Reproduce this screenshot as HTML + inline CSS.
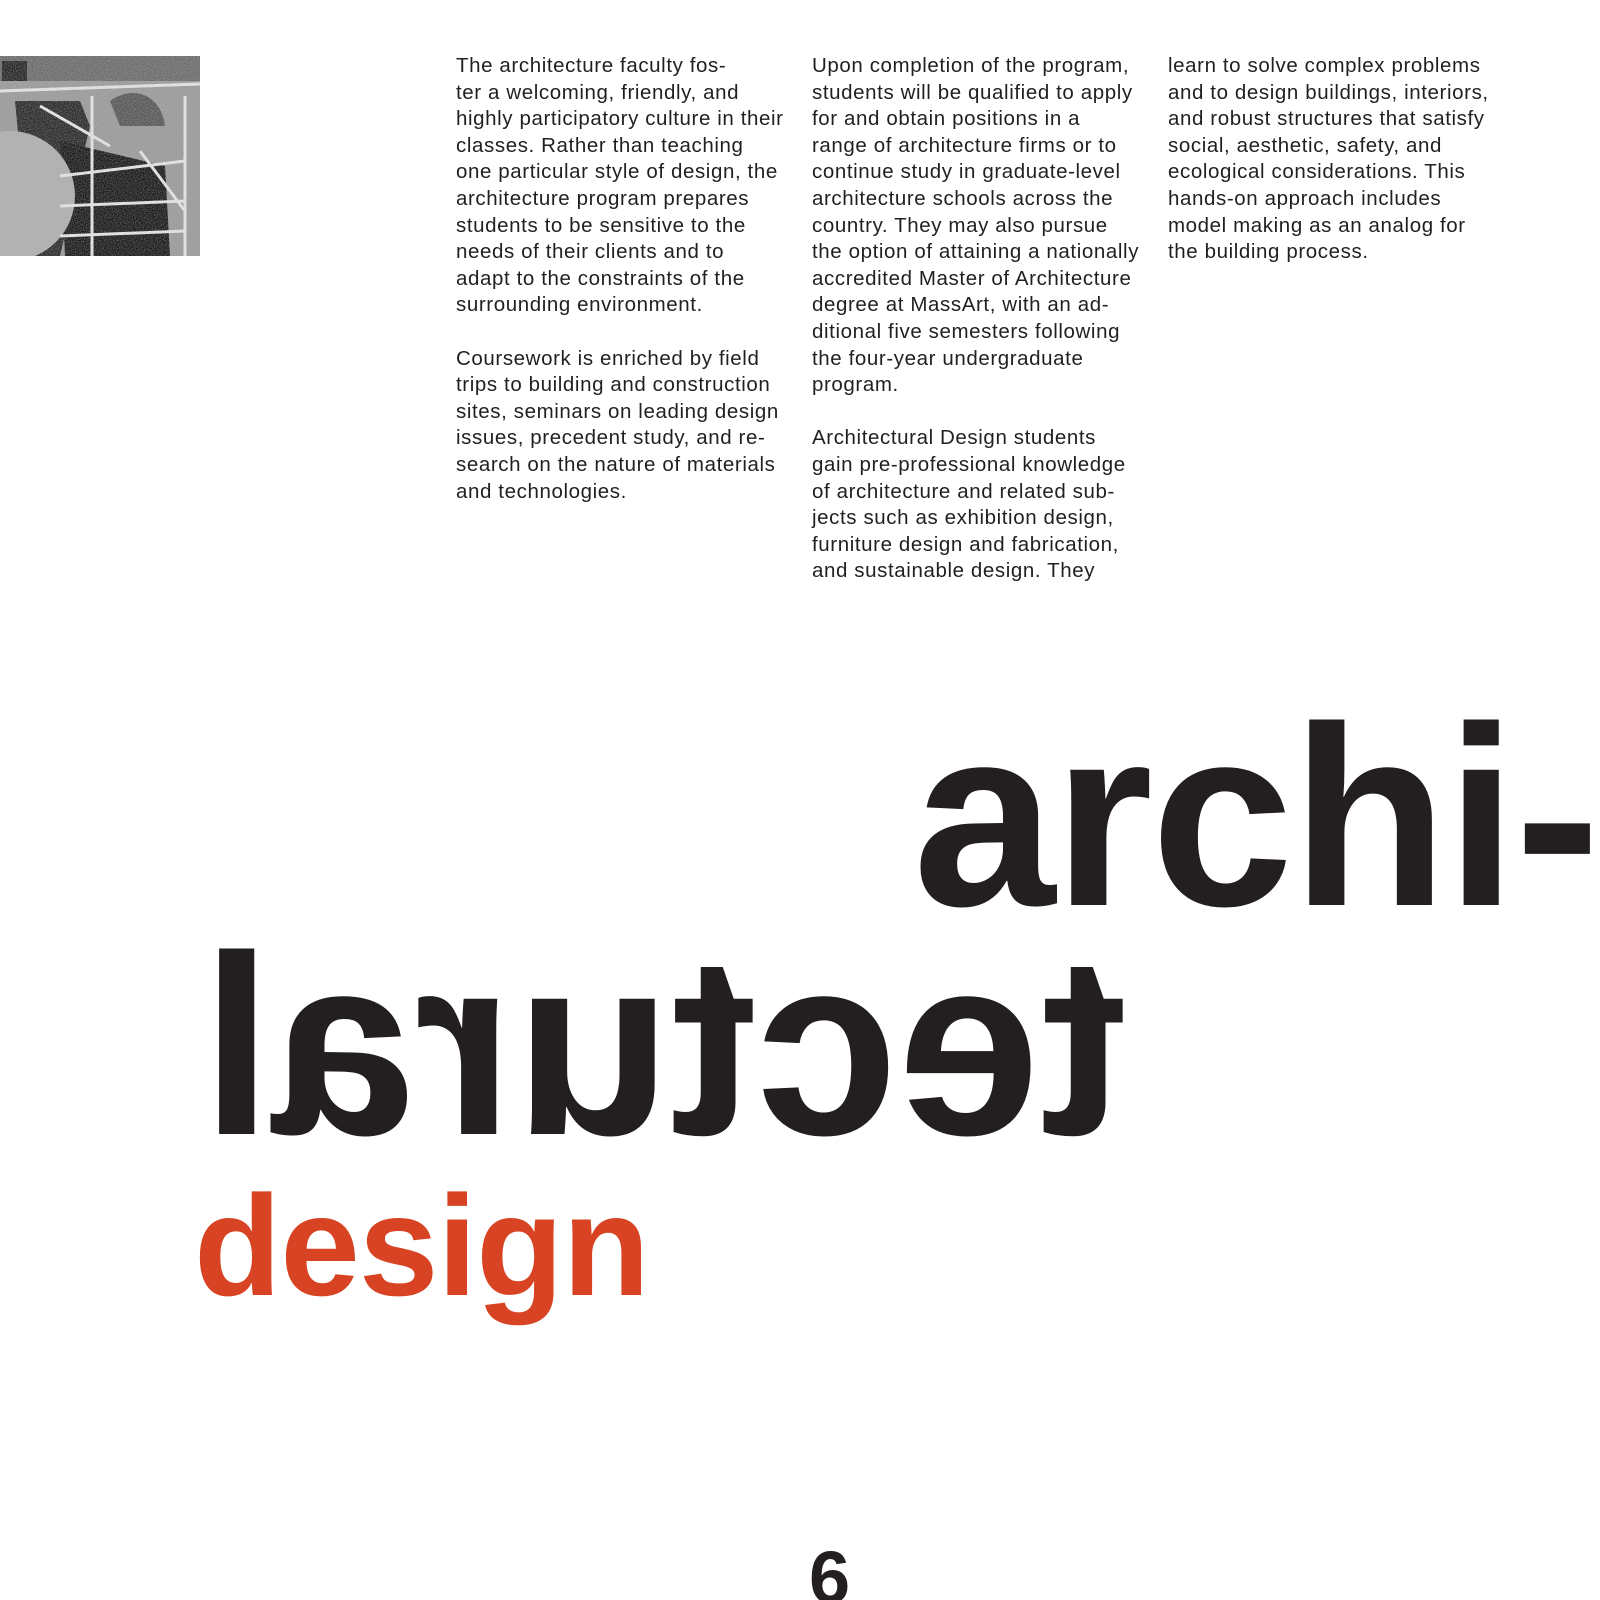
<!DOCTYPE html>
<html><head><meta charset="utf-8"><style>
html,body{margin:0;padding:0;background:#fff;width:1600px;height:1600px;overflow:hidden;position:relative}
.col{position:absolute;top:53px;font-family:"Liberation Sans",sans-serif;font-size:20.5px;line-height:26.6px;color:#231f20;white-space:pre;letter-spacing:0.6px}
.big{position:absolute;font-family:"Liberation Sans",sans-serif;font-weight:bold;line-height:1;white-space:pre;color:#231f20}
</style></head><body>
<svg style="position:absolute;left:0;top:56px" width="200" height="200" viewBox="0 0 200 200">
<defs><filter id="n"><feTurbulence type="fractalNoise" baseFrequency="0.9" numOctaves="2" seed="3"/><feColorMatrix type="matrix" values="0 0 0 0 0.5 0 0 0 0 0.5 0 0 0 0 0.5 0 0 0 1.6 -0.5"/></filter></defs>
<rect width="200" height="200" fill="#9a9a9a"/>
<rect x="0" y="0" width="200" height="25" fill="#6a6a6a"/>
<rect x="2" y="5" width="25" height="20" fill="#222"/>
<path d="M15 45 L80 45 L90 70 L60 200 L30 200 Z" fill="#1a1a1a" opacity="0.9"/>
<path d="M60 85 L165 110 L170 200 L65 200 Z" fill="#151515"/>
<circle cx="10" cy="140" r="65" fill="#b0b0b0"/>
<path d="M110 45 C130 30 160 35 165 70 L120 70 Z" fill="#555"/>
<g stroke="#e8e8e8" stroke-width="3" fill="none">
<line x1="0" y1="35" x2="200" y2="28"/>
<line x1="92" y1="40" x2="92" y2="200"/>
<line x1="185" y1="40" x2="185" y2="200"/>
<line x1="60" y1="120" x2="185" y2="105"/>
<line x1="60" y1="150" x2="185" y2="145"/>
<line x1="60" y1="180" x2="185" y2="175"/>
<line x1="40" y1="50" x2="110" y2="90"/>
<line x1="140" y1="95" x2="185" y2="155"/>
</g>
<rect width="200" height="200" filter="url(#n)" opacity="0.6"/>
</svg>
<div class="col" style="left:456px">The architecture faculty fos-
ter a welcoming, friendly, and
highly participatory culture in their
classes. Rather than teaching
one particular style of design, the
architecture program prepares
students to be sensitive to the
needs of their clients and to
adapt to the constraints of the
surrounding environment.

Coursework is enriched by field
trips to building and construction
sites, seminars on leading design
issues, precedent study, and re-
search on the nature of materials
and technologies.</div>
<div class="col" style="left:812px">Upon completion of the program,
students will be qualified to apply
for and obtain positions in a
range of architecture firms or to
continue study in graduate-level
architecture schools across the
country. They may also pursue
the option of attaining a nationally
accredited Master of Architecture
degree at MassArt, with an ad-
ditional five semesters following
the four-year undergraduate
program.

Architectural Design students
gain pre-professional knowledge
of architecture and related sub-
jects such as exhibition design,
furniture design and fabrication,
and sustainable design. They</div>
<div class="col" style="left:1168px">learn to solve complex problems
and to design buildings, interiors,
and robust structures that satisfy
social, aesthetic, safety, and
ecological considerations. This
hands-on approach includes
model making as an analog for
the building process.</div>
<div class="big" style="left:913px;top:689px;font-size:256px;letter-spacing:-2px">archi-</div>
<div class="big" style="left:201px;top:918px;font-size:256px;transform:scaleX(-1);transform-origin:center">tectural</div>
<div class="big" style="left:194px;top:1175px;font-size:143px;letter-spacing:-1px;color:#d84423">design</div>
<div class="big" style="left:809px;top:1541px;font-size:74px">6</div>
</body></html>
